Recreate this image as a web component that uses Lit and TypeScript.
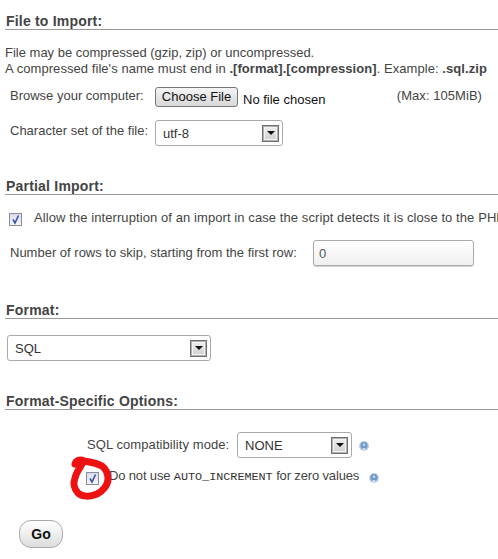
import { LitElement, html, css, svg } from "lit";
import { customElement } from "lit/decorators.js";

const arrow = html`<span class="arrow"><i></i></span>`;
const check = html`<span class="check"><svg width="11" height="11" viewBox="0 0 11 11"><path d="M3 5.5 L5 9 L8.5 1.5" fill="none" stroke="#3a52a8" stroke-width="1.6"/></svg></span>`;
const help = html`<svg class="help" width="10" height="10" viewBox="0 0 10 10"><circle cx="5" cy="5" r="4.9" fill="#b7cbe3"/><circle cx="5" cy="4.6" r="3.5" fill="#7299c8"/><circle cx="5" cy="3.8" r="1.3" fill="#c9d9ec"/><circle cx="5" cy="8" r="1" fill="#eaf1f8"/></svg>`;

@customElement("app-root")
export class AppRoot extends LitElement {
  static styles = css`
    :host { display: block; width: 498px; height: 559px; overflow: hidden; position: relative; background: #fff;
      font: 13px "Liberation Sans", Arial, sans-serif; color: #444; box-sizing: border-box; padding: 13px 0 0 5px; }
    h2 { margin: 0; font-size: 14px; line-height: 16px; font-weight: bold; letter-spacing: .2px; color: #444; border-bottom: 1px solid #999; padding: 0 0 0 1px; }
    p { margin: 0; }
    .wide { letter-spacing: .06px; }
    .intro { margin-top: 15px; line-height: 16px; white-space: nowrap; }
    .row { display: flex; white-space: nowrap; }
    .browse { margin: 10px 0 0 5px; height: 22px; }
    .browse .lbl { width: 145px; line-height: 17px; }
    .file { display: flex; }
    .btn { box-sizing: border-box; width: 83px; height: 20px; border: 1px solid #777; border-radius: 3px; background: linear-gradient(#f4f4f4, #d8d8d8); color: #111; text-align: center; line-height: 18px; font-size: 13px; }
    .nofile { margin: 5px 0 0 5px; color: #111; line-height: 16px; }
    .max { margin-left: auto; margin-right: 16px; line-height: 17px; letter-spacing: .05px; }
    .charset { margin: 11px 0 0 5px; align-items: flex-start; }
    .charset .lbl { width: 145px; line-height: 22px; }
    .select { box-sizing: border-box; height: 26px; border: 1px solid #aaa; border-radius: 3px; display: flex; justify-content: space-between; align-items: center; padding: 0 3px 0 7px; background: #fff; color: #333; }
    .arrow { box-sizing: border-box; width: 17px; height: 17px; border: 1px solid #707070; background: linear-gradient(#f0f0f0, #cfcfcf); display: flex; align-items: center; justify-content: center; box-shadow: inset 0 0 0 1px #b0b0b0, inset 0 0 0 2px #f4f4f4; }
    .arrow i { width: 0; height: 0; border: 4px solid transparent; border-top-color: #111; border-bottom: 0; }
    .partial { margin-top: 32px; }
    .check { box-sizing: border-box; flex: none; display: inline-block; width: 13px; height: 13px; border: 1px solid #8c8c94; background: linear-gradient(#d9dded, #f4f5fa); line-height: 0; }
    .allow { margin: 15px 0 0 4px; line-height: 16px; overflow: hidden; }
    .allow .check { margin-top: 3px; }
    .allow .t { margin-left: 12px; letter-spacing: .085px; }
    .skip { margin: 14px 0 0 5px; align-items: center; }
    .skip .lbl { width: 303px; padding-bottom: 2px; }
    .input { box-sizing: border-box; width: 161px; height: 26px; border: 1px solid #aaa; border-radius: 3px; background: linear-gradient(#fff, #f0f0f0); box-shadow: 0 1px 1px #ccc; padding: 6px 5px; color: #555; line-height: 14px; }
    .format { margin-top: 36px; }
    .sql { margin: 16px 0 0 2px; width: 204px; }
    .specific { margin-top: 32px; }
    .compat { margin: 22px 0 0 82px; align-items: center; }
    .compat .lbl { width: 150px; letter-spacing: .08px; padding-bottom: 2px; }
    .compat .select { width: 115px; }
    .compat .help { margin-left: 7px; margin-top: 1px; }
    .noauto { margin: 10px 0 0 81px; line-height: 16px; }
    .noauto .check { margin: 4px 10px 0 0; }
    .noauto .t { letter-spacing: -.15px; }
    .noauto code { font: 11.8px "Liberation Mono", monospace; letter-spacing: -.02px; color: #333; }
    .noauto .help { margin-left: 10px; margin-top: 5px; }
    .go { box-sizing: border-box; display: block; margin: 35px 0 0 14px; width: 44px; height: 28px; border: 1px solid #aaa; border-radius: 12px; background: linear-gradient(#fff, #ddd); color: #111; font-weight: bold; font-size: 14px; line-height: 26px; text-align: center; }
    .scribble { position: absolute; left: 66px; top: 450px; }
  `;

  render() {
    return html`
      <h2>File to Import:</h2>
      <p class="intro">File may be compressed (gzip, zip) or uncompressed.<br><span class="wide">A compressed file's name must end in <b>.[format].[compression]</b>. Example: <b>.sql.zip</b></span></p>
      <div class="row browse">
        <span class="lbl">Browse your computer:</span>
        <span class="file"><span class="btn">Choose File</span><span class="nofile">No file chosen</span></span>
        <span class="max">(Max: 105MiB)</span>
      </div>
      <div class="row charset">
        <span class="lbl">Character set of the file:</span>
        <span class="select" style="width:128px"><span>utf-8</span>${arrow}</span>
      </div>
      <h2 class="partial">Partial Import:</h2>
      <div class="row allow">${check}<span class="t">Allow the interruption of an import in case the script detects it is close to the PHP timeout limit.</span></div>
      <div class="row skip"><span class="lbl">Number of rows to skip, starting from the first row:</span><span class="input">0</span></div>
      <h2 class="format">Format:</h2>
      <div class="select sql"><span>SQL</span>${arrow}</div>
      <h2 class="specific">Format-Specific Options:</h2>
      <div class="row compat"><span class="lbl">SQL compatibility mode:</span><span class="select"><span>NONE</span>${arrow}</span>${help}</div>
      <div class="row noauto">${check}<span class="t">Do not use <code>AUTO_INCREMENT</code> for zero values</span>${help}</div>
      <div class="go">Go</div>
      <svg class="scribble" width="50" height="54" viewBox="66 450 50 54">
        ${svg`<path d="M75 464 C76 460 80 459 84 461 C90 462 97 463 102 466 C106 469 108 474 108 479 C108 485 103 491 97 494 C90 497 82 497 78 493 C74 489 73 483 75 478 C76 473 79 469 82 464" fill="none" stroke="#ee1111" stroke-width="7" stroke-linecap="round" stroke-linejoin="round"/>`}
      </svg>
    `;
  }
}
